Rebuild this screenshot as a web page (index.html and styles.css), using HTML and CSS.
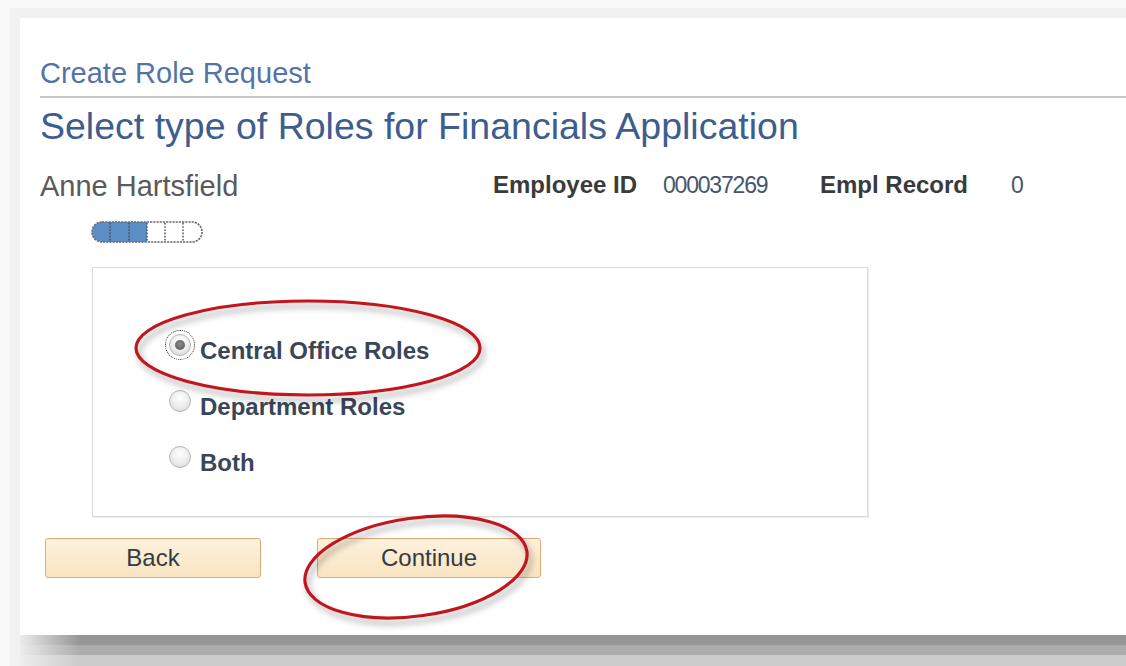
FILE: index.html
```html
<!DOCTYPE html>
<html lang="en">
<head>
<meta charset="utf-8">
<title>Create Role Request</title>
<link rel="stylesheet" href="styles.css">
</head>
<body>
<div class="screen">
  <div class="frame">
    <main class="page">
      <h1 class="crumb">Create Role Request</h1>
      <h2 class="title">Select type of Roles for Financials Application</h2>

      <div class="ident">
        <div class="name">Anne Hartsfield</div>
        <div class="lbl lbl-id">Employee ID</div>
        <div class="val val-id">000037269</div>
        <div class="lbl lbl-rec">Empl Record</div>
        <div class="val">0</div>
      </div>

      <!-- step indicator: 6 segments, first 3 done -->
      <svg class="steps" viewBox="0 0 112 22" width="112" height="22" aria-hidden="true">
        <path d="M11 1 H56 V21 H11 A10 10 0 0 1 11 1 Z" fill="#5b8dc6"/>
        <path d="M11 1 H101 A10 10 0 0 1 101 21 H11 A10 10 0 0 1 11 1 Z" fill="none" stroke="#6a6a6a" stroke-width="1.6" stroke-dasharray="2.2 1"/>
        <g stroke="#4a4a4a" stroke-width="1.4" stroke-dasharray="1.6 1.6">
          <line x1="19" y1="2" x2="19" y2="20"/>
          <line x1="38" y1="2" x2="38" y2="20"/>
          <line x1="56" y1="2" x2="56" y2="20"/>
          <line x1="74" y1="2" x2="74" y2="20"/>
          <line x1="92" y1="2" x2="92" y2="20"/>
        </g>
      </svg>

      <section class="choices">
        <label class="opt"><span class="radio is-checked is-focus"></span>Central Office Roles</label>
        <label class="opt"><span class="radio"></span>Department Roles</label>
        <label class="opt"><span class="radio"></span>Both</label>
      </section>

      <div class="actions">
        <button class="btn" type="button">Back</button>
        <button class="btn btn-continue" type="button">Continue</button>
      </div>

      <!-- hand-drawn callout rings -->
      <svg class="ring ring-option" viewBox="0 0 360 130" width="360" height="130" aria-hidden="true">
        <ellipse cx="178" cy="58" rx="172" ry="47" fill="none" stroke="#c2161f" stroke-width="3.2"/>
      </svg>
      <svg class="ring ring-continue" viewBox="0 0 260 130" width="260" height="130" aria-hidden="true">
        <ellipse cx="126" cy="62" rx="112" ry="49" transform="rotate(-8 126 62)" fill="none" stroke="#c2161f" stroke-width="3.2"/>
      </svg>
    </main>
    <div class="shadow"></div>
  </div>
</div>
</body>
</html>
```

FILE: styles.css
```css
* { box-sizing: border-box; }

body {
  margin: 0;
  font-family: "Liberation Sans", Arial, sans-serif;
  background: #f9f9f9;
}

.screen {
  width: 1126px;
  height: 666px;
  overflow: hidden;
  background: #f9f9f9;
}

.frame {
  margin: 8px 0 0 10px;
  padding: 10px 0 0 10px;
  height: 658px;
  background: #f1f1f1;
  display: flex;
  flex-direction: column;
}

.page {
  position: relative;
  flex: none;
  height: 617px;
  padding: 38px 0 0 20px;
  background: #fff;
}

.shadow {
  flex: none;
  height: 31px;
  background:
    linear-gradient(to right, rgba(240, 240, 240, 0.95), rgba(240, 240, 240, 0) 60px),
    linear-gradient(#969696 0 10px, #acacac 10px 20px, #cbcbcb 20px);
}

/* headings */
.crumb {
  margin: 0;
  padding-bottom: 6px;
  font-size: 29px;
  line-height: 34px;
  font-weight: normal;
  color: #5474a6;
  border-bottom: 2px solid #c8c8c8;
}

.title {
  margin: 6px 0 0;
  font-size: 37.5px;
  line-height: 44px;
  font-weight: normal;
  color: #3e5d8f;
}

/* employee line */
.ident {
  display: flex;
  align-items: flex-start;
  margin-top: 21px;
}

.name {
  width: 453px;
  font-size: 29px;
  line-height: 34px;
  color: #5a5a5a;
}

.lbl {
  margin-top: 2px;
  font-size: 24px;
  line-height: 28px;
  font-weight: bold;
  color: #3a3a3a;
}

.lbl-id { width: 170px; }
.lbl-rec { width: 191px; }

.val {
  margin-top: 2px;
  font-size: 23px;
  line-height: 28px;
  letter-spacing: -1.2px;
  color: #46566e;
}

.val-id { width: 157px; }

.steps {
  display: block;
  margin: 18px 0 0 51px;
}

/* option group */
.choices {
  display: flex;
  flex-direction: column;
  gap: 28px;
  width: 776px;
  height: 250px;
  margin: 24px 0 0 52px;
  padding: 69px 0 0 76px;
  border: 1px solid #dcdcdc;
  box-shadow: 1px 1px 0 #ededed;
}

.opt {
  display: flex;
  align-items: flex-start;
  gap: 9px;
  font-size: 24px;
  line-height: 28px;
  font-weight: bold;
  color: #3a4657;
}

.radio {
  position: relative;
  flex: none;
  width: 22px;
  height: 22px;
  margin-top: -3px;
  border: 1px solid #b4b4b4;
  border-radius: 50%;
  background: radial-gradient(circle at 50% 35%, #ffffff 0, #ececec 55%, #d2d2d2 100%);
}

.radio.is-checked::after {
  content: "";
  position: absolute;
  left: 5px;
  top: 5px;
  width: 10px;
  height: 10px;
  border-radius: 50%;
  background: radial-gradient(circle at 50% 40%, #8a8a8a 0, #555 100%);
}

.radio.is-focus {
  outline: 1px dotted #222;
  outline-offset: 3px;
}

/* buttons */
.actions {
  display: flex;
  gap: 56px;
  margin: 21px 0 0 5px;
}

.btn {
  width: 216px;
  height: 40px;
  padding: 0;
  border: 1px solid #e0aa78;
  border-radius: 3px;
  background: linear-gradient(#fdf2de, #f9e4c1);
  font-family: "Liberation Sans", Arial, sans-serif;
  font-size: 24px;
  color: #353a44;
}

.btn-continue { width: 224px; }

/* callout rings over the form */
.ring {
  position: absolute;
  overflow: visible;
  filter: drop-shadow(3px 5px 3px rgba(0, 0, 0, 0.35));
}

.ring-option {
  left: 110px;
  top: 272px;
}

.ring-continue {
  left: 270px;
  top: 487px;
}
```
